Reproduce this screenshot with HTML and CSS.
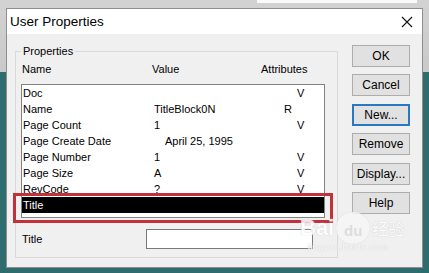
FILE: index.html
```html
<!DOCTYPE html>
<html>
<head>
<meta charset="utf-8">
<link rel="stylesheet" href="styles.css">
</head>
<body>
<div class="desktop">
  <div class="desk-strip"></div>
  <div class="window">
    <div class="titlebar">
      <span class="title">User Properties</span>
      <svg class="close" width="12" height="12" viewBox="0 0 12 12"><path d="M1 1 L11 11 M11 1 L1 11" stroke="#111" stroke-width="1.1" fill="none"/></svg>
    </div>
    <div class="client">
      <fieldset class="group">
        <legend>Properties</legend>
        <div class="headers">
          <span>Name</span><span>Value</span><span>Attributes</span>
        </div>
        <div class="list">
          <div class="row"><span>Doc</span><span></span><span class="attr-v">V</span></div>
          <div class="row"><span>Name</span><span>TitleBlock0N</span><span class="attr-r">R</span></div>
          <div class="row"><span>Page Count</span><span>1</span><span class="attr-v">V</span></div>
          <div class="row"><span>Page Create Date</span><span class="indent">April 25, 1995</span><span></span></div>
          <div class="row"><span>Page Number</span><span>1</span><span class="attr-v">V</span></div>
          <div class="row"><span>Page Size</span><span>A</span><span class="attr-v">V</span></div>
          <div class="row"><span>RevCode</span><span>?</span><span class="attr-v">V</span></div>
          <div class="row selected"><span>Title</span><span></span><span></span></div>
        </div>
        <div class="field">
          <label class="field-label">Title</label>
          <input class="field-input" type="text">
        </div>
      </fieldset>
      <div class="buttons">
        <button class="btn">OK</button>
        <button class="btn">Cancel</button>
        <button class="btn focused">New...</button>
        <button class="btn">Remove</button>
        <button class="btn">Display...</button>
        <button class="btn">Help</button>
      </div>
    </div>
    <div class="highlight"></div>
    <div class="watermark">
      <span class="wm-bai">Bai</span><span class="wm-paw">du</span><span class="wm-cn">经验</span>
      <div class="wm-url">jingyan.baidu.com</div>
    </div>
  </div>
</div>
</body>
</html>
```
FILE: styles.css
```css
html, body {
  margin: 0;
  padding: 0;
}
body {
  width: 429px;
  height: 273px;
  overflow: hidden;
  background: linear-gradient(to bottom, #d2d2d2 0, #c9c9c9 72px, #2e6c6d 72px, #2e6c6d 100%);
  font-family: "Liberation Sans", Arial, sans-serif;
}
.desktop {
  position: relative;
  padding: 8px 0 0 6px;
}
.desk-strip {
  position: absolute;
  left: 257px;
  top: 0;
  width: 160px;
  height: 3px;
  background: #fafafa;
}
.window {
  position: relative;
  width: 417px;
  height: 260px;
  box-sizing: border-box;
  border: 1px solid #8e8e8e;
  background: #f0f0f0;
}
.titlebar {
  height: 25px;
  background: #ffffff;
  display: flex;
  align-items: center;
  justify-content: space-between;
  padding: 0 9px 0 3px;
}
.title {
  font-size: 13.5px;
  color: #000;
  line-height: 25px;
}
.close {
  display: block;
  margin-top: 1px;
}
.client {
  display: flex;
  align-items: flex-start;
  padding: 11px 12px 0 8px;
  gap: 14px;
}
.group {
  margin: 0;
  width: 323px;
  box-sizing: border-box;
  border: 1px solid #d9d9d9;
  padding: 0 11px 8px 5px;
  min-width: 0;
}
.group legend {
  font-size: 11px;
  line-height: 13px;
  padding: 0 2px;
  color: #000;
}
.headers {
  display: grid;
  grid-template-columns: 130px 109px 1fr;
  padding-left: 1px;
  margin-top: 5px;
  font-size: 11px;
  line-height: 13px;
  color: #000;
}
.list {
  margin-top: 8px;
  width: 304px;
  height: 134px;
  box-sizing: border-box;
  border: 1px solid #828282;
  background: #ffffff;
  overflow: hidden;
}
.row {
  display: grid;
  grid-template-columns: 131px 130px 1fr;
  height: 16px;
  line-height: 16px;
  font-size: 11px;
  padding-left: 1px;
  color: #000;
  white-space: nowrap;
}
.row.selected {
  background: #000;
  color: #fff;
}
.indent {
  padding-left: 11px;
}
.attr-r {
  padding-left: 0;
}
.attr-v {
  padding-left: 13px;
}
.field {
  display: flex;
  align-items: center;
  margin-top: 11px;
  padding-left: 1px;
}
.field-label {
  width: 124px;
  font-size: 11px;
  color: #000;
}
.field-input {
  margin: 0;
  width: 167px;
  height: 20px;
  box-sizing: border-box;
  border: 1px solid #7a7a7a;
  background: #fff;
  padding: 0;
}
.buttons {
  display: flex;
  flex-direction: column;
  gap: 7.4px;
  width: 58px;
}
.btn {
  height: 22px;
  width: 58px;
  box-sizing: border-box;
  margin: 0;
  padding: 0;
  border: 1px solid #adadad;
  background: #e1e1e1;
  font-family: "Liberation Sans", Arial, sans-serif;
  font-size: 12px;
  color: #000;
}
.btn.focused {
  border: 2px solid #2a78c0;
}
.highlight {
  position: absolute;
  left: 6px;
  top: 184px;
  width: 320px;
  height: 30px;
  box-sizing: border-box;
  border: 3px solid #c3303a;
}
.watermark {
  position: absolute;
  left: 293px;
  top: 203px;
  width: 115px;
  color: #ffffff;
  text-shadow: 0 0 1px #c8c8c8, 0 0 1px #d6d6d6;
  opacity: 0.85;
  white-space: nowrap;
}
.wm-bai {
  font-size: 22px;
  font-weight: bold;
  vertical-align: middle;
}
.wm-paw {
  display: inline-block;
  width: 34px;
  height: 32px;
  border-radius: 50%;
  background: #f6f6f6;
  box-shadow: 0 0 1px #cccccc;
  color: #dadada;
  text-shadow: none;
  font-size: 15px;
  font-weight: bold;
  text-align: center;
  line-height: 38px;
  vertical-align: middle;
  margin: 0 2px 0 2px;
}
.wm-cn {
  font-family: "Noto Sans CJK SC", sans-serif;
  font-size: 16px;
  vertical-align: middle;
}
.wm-url {
  font-size: 9px;
  margin-top: -2px;
  padding-left: 8px;
  letter-spacing: 0.4px;
}
```
